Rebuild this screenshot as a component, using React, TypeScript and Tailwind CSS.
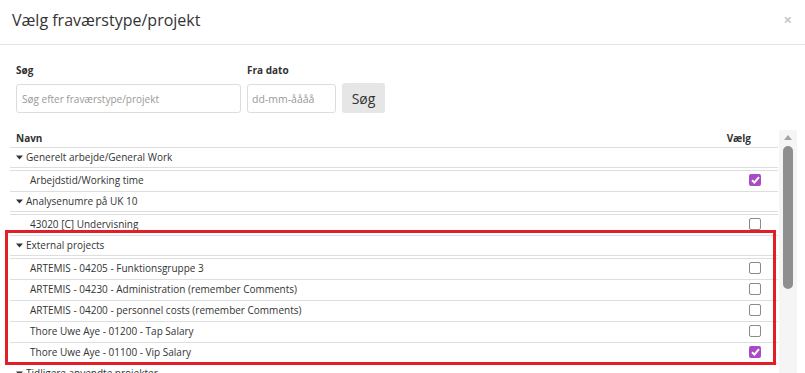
import React from 'react';

type Item = { name: string; checked: boolean };
type Group = { title: string; items: Item[] };

const groups: Group[] = [
  { title: 'Generelt arbejde/General Work', items: [{ name: 'Arbejdstid/Working time', checked: true }] },
  { title: 'Analysenumre på UK 10', items: [{ name: '43020 [C] Undervisning', checked: false }] },
  {
    title: 'External projects',
    items: [
      { name: 'ARTEMIS - 04205 - Funktionsgruppe 3', checked: false },
      { name: 'ARTEMIS - 04230 - Administration (remember Comments)', checked: false },
      { name: 'ARTEMIS - 04200 - personnel costs (remember Comments)', checked: false },
      { name: 'Thore Uwe Aye - 01200 - Tap Salary', checked: false },
      { name: 'Thore Uwe Aye - 01100 - Vip Salary', checked: true },
    ],
  },
  { title: 'Tidligere anvendte projekter', items: [] },
];

const Caret = () => (
  <svg width="7" height="5" viewBox="0 0 7 5" className="mr-[3px]">
    <path d="M0 0.5 L7 0.5 L3.5 4.5 Z" fill="#333" />
  </svg>
);

const Checkbox = ({ checked }: { checked: boolean }) =>
  checked ? (
    <span className="flex h-[12px] w-[12px] items-center justify-center rounded-[2px] bg-[#a94bc6]">
      <svg width="9" height="8" viewBox="0 0 9 8">
        <path d="M1 4.2 L3.4 6.5 L8 1.2" stroke="#fff" strokeWidth="2" fill="none" />
      </svg>
    </span>
  ) : (
    <span className="h-[12px] w-[12px] rounded-[2px] border border-[#8a8a8a] bg-white" />
  );

export default function App() {
  return (
    <div className="relative h-[373px] w-[805px] overflow-hidden bg-white text-[#333]" style={{ fontFamily: '"Open Sans", sans-serif' }}>
      {/* header */}
      <div className="flex h-[45px] items-center justify-between border-b border-[#e5e5e5] pb-[4px] pl-[12px] pr-[13px]">
        <h1 className="text-[16px] leading-none text-[#333]">Vælg fraværstype/projekt</h1>
        <span className="-mt-[2px] text-[15px] font-bold leading-none text-[#c8c8c8]">×</span>
      </div>

      {/* search */}
      <div className="flex items-end gap-[6px] pl-[16px] pt-[18px]">
        <div className="flex flex-col">
          <label className="mb-[7px] text-[10px] font-bold leading-[14px]">Søg</label>
          <input
            className="h-[29px] w-[225px] rounded-[3px] border border-[#dcdcdc] px-[5px] text-[10px] outline-none placeholder:text-[#999]"
            placeholder="Søg efter fraværstype/projekt"
          />
        </div>
        <div className="flex flex-col">
          <label className="mb-[7px] text-[10px] font-bold leading-[14px]">Fra dato</label>
          <input
            className="h-[29px] w-[89px] rounded-[3px] border border-[#dcdcdc] px-[4px] text-[10.5px] outline-none placeholder:text-[#999]"
            placeholder="dd-mm-åååå"
          />
        </div>
        <button className="h-[30px] w-[43px] rounded-[3px] bg-[#e6e6e6] text-[14px] text-[#333]">Søg</button>
      </div>

      {/* table + scrollbar */}
      <div className="mt-[17px] flex pl-[10px] pr-[8px]">
        <div className="flex-1">
          <div className="flex h-[18px] items-center justify-between border-b border-[#dedede] pl-[6px] pr-[27px] text-[10px] font-bold">
            <span>Navn</span>
            <span>Vælg</span>
          </div>
          {groups.map((g) => (
            <div key={g.title}>
              <div className="flex h-[20px] items-center border-b border-[#dedede] pl-[6px] text-[10px]">
                <Caret />
                {g.title}
              </div>
              {g.items.length > 0 && (
                <div className="mt-[2px] border-t border-[#dedede]">
                  {g.items.map((it) => (
                    <div key={it.name} className="flex h-[21px] items-center justify-between border-b border-[#dedede] pb-[2px] pl-[20px] pr-[17px] text-[10px]">
                      <span>{it.name}</span>
                      <Checkbox checked={it.checked} />
                    </div>
                  ))}
                </div>
              )}
            </div>
          ))}
        </div>
        <div className="ml-[1px] flex w-[18px] flex-col items-center bg-[#f5f5f5] pt-[5px]">
          <svg width="8" height="5" viewBox="0 0 8 5">
            <path d="M0 5 L4 0 L8 5 Z" fill="#a3a3a3" />
          </svg>
          <div className="mt-[6px] h-[143px] w-[10px] rounded-full bg-[#8f8f8f]" />
        </div>
      </div>

      {/* annotation */}
      <div className="pointer-events-none absolute left-[5px] top-[230px] h-[135px] w-[771px] border-[3px] border-[#e41e26]" />
    </div>
  );
}
